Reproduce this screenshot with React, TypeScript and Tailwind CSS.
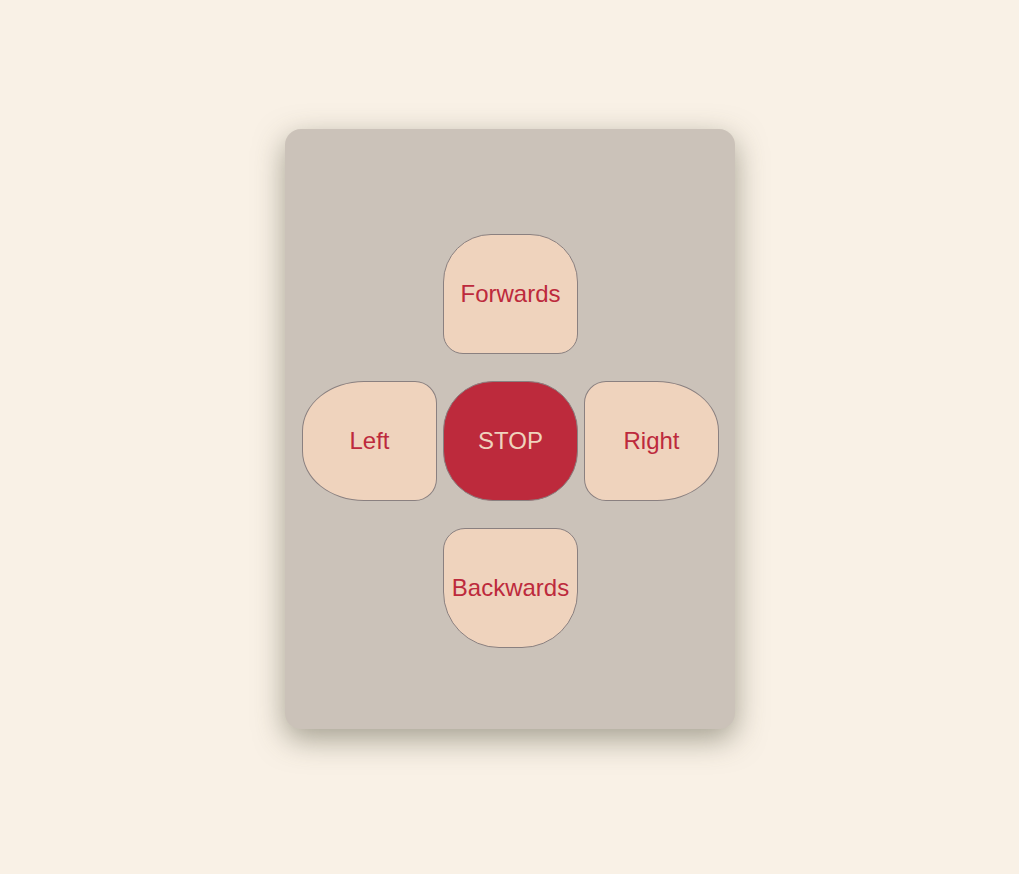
const btn =
  "flex items-center justify-center w-[135px] h-[120px] border border-[#8a8080] text-[24px] bg-[#efd3bd] text-[#bd2a3c]";

const App = () => {
  return (
    <div
      className="min-h-screen w-full bg-[#f9f1e6] pt-[129px]"
      style={{ fontFamily: '"Liberation Sans", Arial, sans-serif' }}
    >
      <div className="mx-auto w-[450px] h-[600px] rounded-[16px] bg-[#cbc2b9] shadow-[0_10px_30px_rgba(80,80,60,0.5)] flex justify-center pt-[105px] pl-[2px]">
        <div className="grid grid-cols-[135px_135px_135px] grid-rows-[120px_120px_120px] gap-x-[6px] gap-y-[27px]">
          <div />
          <button className={btn + " rounded-t-[48px] rounded-b-[20px]"}>Forwards</button>
          <div />
          <button className={btn + " rounded-l-[62px_50px] rounded-r-[22px]"}>Left</button>
          <button className="flex items-center justify-center w-[135px] h-[120px] border border-[#8a8080] text-[24px] bg-[#bd2a3c] text-[#efd3bd] rounded-[50px]">
            STOP
          </button>
          <button className={btn + " rounded-r-[62px_50px] rounded-l-[22px]"}>Right</button>
          <div />
          <button className={btn + " rounded-t-[22px] rounded-b-[56px]"}>Backwards</button>
          <div />
        </div>
      </div>
    </div>
  );
};

export default App;
